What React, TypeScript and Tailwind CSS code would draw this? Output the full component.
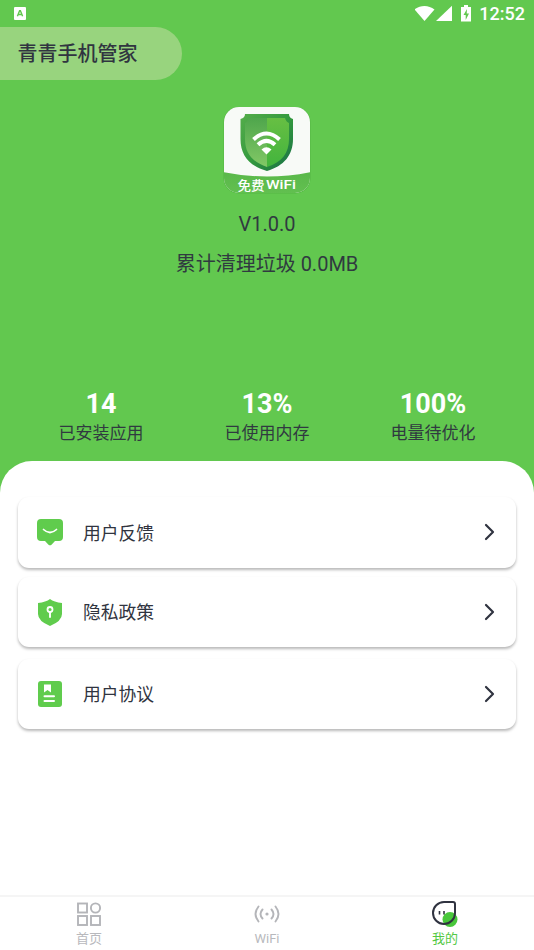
import type { ReactNode } from "react";

const stats = [
  { value: "14", label: "已安装应用" },
  { value: "13%", label: "已使用内存" },
  { value: "100%", label: "电量待优化" },
];

function StatusBar() {
  return (
    <div className="flex h-[27px] items-center justify-between pr-[9px] pl-[14px] text-white">
      <svg width="12" height="13" viewBox="0 0 12 13">
        <rect width="12" height="13" rx="1" fill="#fff" />
        <path d="M3.4 9.3 5.6 3.7h.8l2.2 5.6M4.2 7.5h3.6" fill="none" stroke="#62c84f" strokeWidth="1.4" />
      </svg>
      <div className="flex items-center">
        <svg width="58" height="18" viewBox="0 0 58 18" fill="#fff">
          <path d="M-.5 4.500C5.500-.2 13.500-.2 19.500 4.500L9.500 16Z" />
          <path d="M37 .8v15.200H21Z" />
          <path d="M49 0h4v2h3v14.500H46V2h3Z" />
          <path d="M52 4 48.500 10h2.200v5L54 8.600h-2.300Z" fill="#62c84f" />
        </svg>
        <span className="ml-[6px] text-[18px] leading-[27px] font-medium">12:52</span>
      </div>
    </div>
  );
}

function AppLogo() {
  return (
    <svg width="88" height="88" viewBox="0 0 88 88">
      <defs>
        <clipPath id="tile"><rect x="1" y="1" width="86" height="86" rx="15" /></clipPath>
        <linearGradient id="rim" x1="0" y1="0" x2="1" y2="1">
          <stop offset="0" stopColor="#55ad4b" /><stop offset=".5" stopColor="#349a3e" /><stop offset="1" stopColor="#176d46" />
        </linearGradient>
        <linearGradient id="left" x1="0" y1="0" x2="0" y2="1">
          <stop offset="0" stopColor="#4fa64c" /><stop offset="1" stopColor="#82c866" />
        </linearGradient>
        <linearGradient id="right" x1="0" y1="0" x2="0" y2="1">
          <stop offset="0" stopColor="#67bf43" /><stop offset="1" stopColor="#42b43d" />
        </linearGradient>
        <linearGradient id="foot" x1="0" y1="0" x2="0" y2="1">
          <stop offset="0" stopColor="#5ab84a" /><stop offset="1" stopColor="#62c050" />
        </linearGradient>
      </defs>
      <rect x=".5" y="1" width="87" height="86.500" rx="15" fill="#54b545" />
      <g clipPath="url(#tile)">
        <rect width="88" height="88" fill="#f8faf7" />
        <path d="M0 66Q44 75 88 66V88H0Z" fill="url(#foot)" />
      </g>
      <path d="M22 8h44q0 4 4 5v20c0 16-9 27-26 32C26 60 17.500 49 17.500 33V13q4.500-1 4.500-5Z" fill="url(#rim)" />
      <path d="M25 12h19v49C29 56 22 47 22 33V17q3-1 3-5Z" fill="url(#left)" />
      <path d="M44 12h18q1 4 4 5v16c0 14-7 23-22 28Z" fill="url(#right)" />
      <g fill="none" stroke="#fff" strokeWidth="4">
        <path d="M30.500 33.500Q43.500 21.500 56.500 33.500" />
        <path d="M35 38.800Q43.500 31 52 38.800" />
      </g>
      <path d="M38.500 43.500Q43.500 39 48.500 43.500L43.500 48.500Z" fill="#fff" />
      <g fill="#fff" className="font-['Roboto','Noto_Sans_CJK_SC',sans-serif] font-medium">
        <text x="14.500" y="83.500" textLength="27" lengthAdjust="spacingAndGlyphs" className="text-[13px]">免费</text>
        <text x="43" y="83" textLength="30" lengthAdjust="spacingAndGlyphs" className="text-[13px]">WiFi</text>
      </g>
    </svg>
  );
}

function MenuCard({ icon, label, className }: { icon: ReactNode; label: string; className: string }) {
  return (
    <div className={`flex items-center rounded-[11px] bg-white pr-[20px] pb-px pl-[18px] shadow-[0_2px_3px_rgba(0,0,0,0.28)] ${className}`}>
      {icon}
      <span className="ml-[19px] flex-1 pt-[3px] text-[17.800px] leading-[26px] text-[#303440]">{label}</span>
      <svg width="13" height="18" viewBox="0 0 13 18" fill="none" stroke="#303440" strokeWidth="2.200" strokeLinecap="round" strokeLinejoin="round">
        <path d="m3 2 7 7-7 7" />
      </svg>
    </div>
  );
}

function FeedbackIcon() {
  return (
    <svg width="28" height="28" viewBox="0 0 28 28">
      <path d="M5 1h18q4 0 4 4v14q0 4-4 4h-4l-3.500 3.700q-1.500 1.300-3 0L9 23H5q-4 0-4-4V5q0-4 4-4Z" fill="#60cc4d" />
      <path d="M7.500 11.500Q14 17.500 20.500 11.500" fill="none" stroke="#fff" strokeWidth="1.700" strokeLinecap="round" />
    </svg>
  );
}

function PrivacyIcon() {
  return (
    <svg width="28" height="28" viewBox="0 0 28 28">
      <path d="M14 1q4 3 12 4v11q0 7-12 12Q2 23 2 16V5q8-1 12-4Z" fill="#60cc4d" />
      <circle cx="14" cy="11.500" r="2.500" fill="none" stroke="#fff" strokeWidth="1.800" />
      <path d="M14 14v5" stroke="#fff" strokeWidth="1.900" strokeLinecap="round" />
    </svg>
  );
}

function AgreementIcon() {
  return (
    <svg width="28" height="28" viewBox="0 0 28 28">
      <rect x="2" y="1" width="24" height="26" rx="3" fill="#60cc4d" />
      <path d="M8 4.500h7v8l-3.500-2.500L8 12.500Z" fill="#fff" />
      <path d="M8.500 16.300h9.500M8.500 21h9.500" stroke="#fff" strokeWidth="2" strokeLinecap="round" />
    </svg>
  );
}

function NavItem({ icon, label, active = false }: { icon: ReactNode; label: string; active?: boolean }) {
  return (
    <div className="flex flex-1 flex-col items-center pt-[3px]">
      {icon}
      <span className={`pt-px text-[13px] leading-[20px] ${active ? "text-[#53c943]" : "text-[#b8b9bd]"}`}>{label}</span>
    </div>
  );
}

export default function App() {
  return (
    <div className="flex h-[950px] w-[534px] flex-col overflow-hidden bg-[#62c84f] font-['Roboto','Noto_Sans_CJK_SC',sans-serif]">
      <StatusBar />
      <h1 className="h-[53px] w-[182px] rounded-r-full bg-[#98d47e] pl-[17.500px] text-[20px] leading-[55px] font-medium text-[#303440]">青青手机管家</h1>

      <section className="flex h-[308px] flex-col items-center pt-[26px] text-[20px] leading-[30px] text-[#303a40]">
        <AppLogo />
        <p className="mt-[15px]">V1.0.0</p>
        <p className="mt-[10px]">累计清理垃圾 0.0MB</p>
      </section>

      <section className="grid h-[73px] grid-cols-3 px-[18px] text-center">
        {stats.map(({ value, label }) => (
          <div key={label}>
            <div className="text-[27px] leading-[32px] font-bold text-white">{value}</div>
            <div className="text-[17px] leading-[27px] text-[#303a40]">{label}</div>
          </div>
        ))}
      </section>

      <main className="flex-1 rounded-t-[32px] bg-white px-[18px] pt-[36px]">
        <MenuCard icon={<FeedbackIcon />} label="用户反馈" className="h-[71px]" />
        <MenuCard icon={<PrivacyIcon />} label="隐私政策" className="mt-[9px] h-[70px]" />
        <MenuCard icon={<AgreementIcon />} label="用户协议" className="mt-[12px] h-[70px]" />
      </main>

      <nav className="flex h-[55px] shrink-0 border-t-2 border-[#f5f5f5] bg-white">
        <NavItem
          label="首页"
          icon={
            <svg width="28" height="28" viewBox="0 0 28 28" fill="none" stroke="#b4b5b9" strokeWidth="1.900">
              <rect x="3" y="3.500" width="9" height="9" /><circle cx="20.500" cy="8" r="4.600" />
              <rect x="3" y="16" width="9" height="9" /><rect x="16" y="16" width="9" height="9" />
            </svg>
          }
        />
        <NavItem
          label="WiFi"
          icon={
            <svg width="28" height="28" viewBox="0 0 28 28" fill="none" stroke="#b4b5b9" strokeWidth="1.900" strokeLinecap="round">
              <circle cx="14" cy="14" r="1.600" fill="#b4b5b9" stroke="none" />
              <path d="M9.500 9.500q-4 4.500 0 9M18.500 9.500q4 4.500 0 9M5.500 6.500q-6 7.500 0 15M22.500 6.500q6 7.500 0 15" />
            </svg>
          }
        />
        <NavItem
          active
          label="我的"
          icon={
            <svg width="28" height="28" viewBox="0 0 28 28">
              <circle cx="19" cy="19.500" r="7.500" fill="#48c73b" />
              <path d="M13 2h9q2 0 2 2v9a11 11 0 1 1-11-11Z" fill="none" stroke="#303340" strokeWidth="2" />
              <path d="M8.500 11v3.500M13 11v3.500" stroke="#303340" strokeWidth="1.600" />
            </svg>
          }
        />
      </nav>
    </div>
  );
}
